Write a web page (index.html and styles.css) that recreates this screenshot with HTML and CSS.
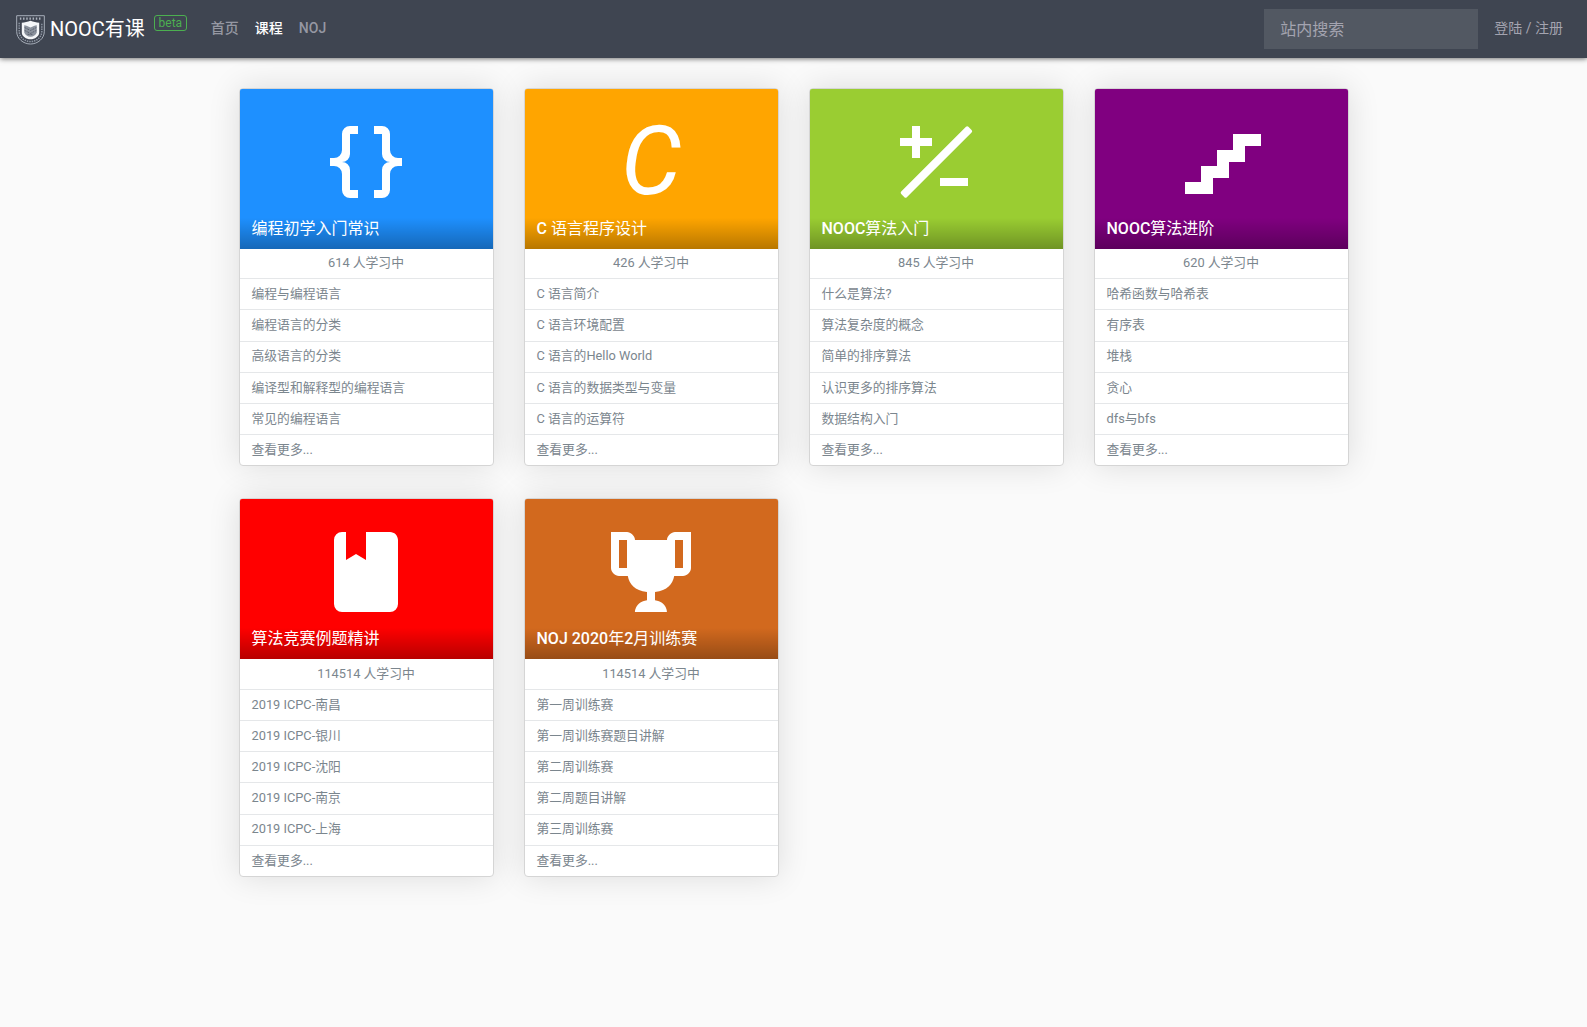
FILE: index.html
```html
<!DOCTYPE html>
<html lang="zh-CN">
<head>
<meta charset="utf-8">
<title>NOOC有课</title>
<link rel="stylesheet" href="styles.css">
</head>
<body>
<nav class="navbar">
  <a class="brand">
    <svg class="logo" viewBox="0 0 30 31" fill="none">
      <path d="M.7.7h28.6V17c0 7.500-7 13-14.300 13S.7 24.500.7 17z" stroke="#a9b0bc" stroke-width="1"/>
      <path d="M4 3.700h22" stroke="#aeb4bf" stroke-width="2.500" stroke-dasharray="1.500 1.800"/>
      <path d="M3.300 8v9.500C4 24 9.500 27.300 15 27.500c5.500-.2 11-3.500 11.700-10V8" stroke="#8e96a3" stroke-width="1.500" stroke-dasharray="1.500 1"/>
      <path d="M6 8c3-.2 6-.8 9-2 3 1.200 6 1.800 9 2v10c0 4-4.500 7-9 7s-9-3-9-7z" fill="#f4f6f8"/>
      <path d="M8.500 10.500c2 0 4 1 6.500 2.500 2.500-1.500 4.500-2.500 6.500-2.500V18c-1 2.500-3.500 4.500-6.500 4.500S9.500 20.500 8.500 18z" fill="#8b929d"/>
      <path d="m9 13 6 3 6-3M9 16l6 3 6-3M12 20h6" stroke="#59606d" stroke-width="1" stroke-dasharray="2 1"/>
    </svg>
    <span class="brand-name">NOOC有课</span>
    <span class="beta">beta</span>
  </a>
  <div class="links"><a>首页</a><a class="active">课程</a><a>NOJ</a></div>
  <input class="search" type="text" placeholder="站内搜索">
  <a class="login">登陆 / 注册</a>
</nav>
<main class="courses">
  <section class="card">
    <div class="cover blue">
      <svg class="icon" viewBox="0 0 24 24"><path d="M8,3A2,2 0 0,0 6,5V9A2,2 0 0,1 4,11H3V13H4A2,2 0 0,1 6,15V19A2,2 0 0,0 8,21H10V19H8V14A2,2 0 0,0 6,12A2,2 0 0,0 8,10V5H10V3M16,3A2,2 0 0,1 18,5V9A2,2 0 0,0 20,11H21V13H20A2,2 0 0,0 18,15V19A2,2 0 0,1 16,21H14V19H16V14A2,2 0 0,1 18,12A2,2 0 0,1 16,10V5H14V3H16Z"/></svg>
      <h2>编程初学入门常识</h2>
    </div>
    <p class="count">614 人学习中</p>
    <ul><li>编程与编程语言</li><li>编程语言的分类</li><li>高级语言的分类</li><li>编译型和解释型的编程语言</li><li>常见的编程语言</li><li>查看更多...</li></ul>
  </section>
  <section class="card">
    <div class="cover orange">
      <span class="letter">C</span>
      <h2><b>C</b> 语言程序设计</h2>
    </div>
    <p class="count">426 人学习中</p>
    <ul><li>C 语言简介</li><li>C 语言环境配置</li><li>C 语言的Hello World</li><li>C 语言的数据类型与变量</li><li>C 语言的运算符</li><li>查看更多...</li></ul>
  </section>
  <section class="card">
    <div class="cover green">
      <svg class="icon" viewBox="0 0 24 24"><path d="M6,3H8V6H11V8H8V11H6V8H3V6H6ZM13,16H20V18H13ZM19.500,3.200Q19.800,2.900 20.100,3.200L20.900,4Q21.200,4.300 20.900,4.600L4.700,20.800Q4.400,21.100 4.100,20.800L3.300,20Q3,19.700 3.300,19.400Z"/></svg>
      <h2><b>NOOC</b>算法入门</h2>
    </div>
    <p class="count">845 人学习中</p>
    <ul><li>什么是算法?</li><li>算法复杂度的概念</li><li>简单的排序算法</li><li>认识更多的排序算法</li><li>数据结构入门</li><li>查看更多...</li></ul>
  </section>
  <section class="card">
    <div class="cover purple">
      <svg class="icon" viewBox="0 0 24 24"><path d="M15,5V9H11V13H7V17H3V20H10V16H14V12H18V8H22V5H15Z"/></svg>
      <h2><b>NOOC</b>算法进阶</h2>
    </div>
    <p class="count">620 人学习中</p>
    <ul><li>哈希函数与哈希表</li><li>有序表</li><li>堆栈</li><li>贪心</li><li>dfs与bfs</li><li>查看更多...</li></ul>
  </section>
  <section class="card">
    <div class="cover red">
      <svg class="icon" viewBox="0 0 24 24"><path d="M18,22A2,2 0 0,0 20,20V4C20,2.890 19.100,2 18,2H12V9L9.500,7.500L7,9V2H6A2,2 0 0,0 4,4V20A2,2 0 0,0 6,22H18Z"/></svg>
      <h2>算法竞赛例题精讲</h2>
    </div>
    <p class="count">114514 人学习中</p>
    <ul><li>2019 ICPC-南昌</li><li>2019 ICPC-银川</li><li>2019 ICPC-沈阳</li><li>2019 ICPC-南京</li><li>2019 ICPC-上海</li><li>查看更多...</li></ul>
  </section>
  <section class="card">
    <div class="cover brown">
      <svg class="icon" viewBox="0 0 24 24"><path d="M20.200,2H18C17.100,2 16,3 16,4H8C8,3 6.900,2 6,2H2V11C2,12 3,13 4,13H6.200C6.600,15 7.900,16.700 11,17V19.080C8,19.540 8,22 8,22H16C16,22 16,19.540 13,19.080V17C16.100,16.700 17.400,15 17.800,13H20C21,13 22,12 22,11V2H20.200M4,11V4H6V11H4M20,11H18V4H20V11Z"/></svg>
      <h2><b>NOJ 2020</b>年<b>2</b>月训练赛</h2>
    </div>
    <p class="count">114514 人学习中</p>
    <ul><li>第一周训练赛</li><li>第一周训练赛题目讲解</li><li>第二周训练赛</li><li>第二周题目讲解</li><li>第三周训练赛</li><li>查看更多...</li></ul>
  </section>
</main>
</body>
</html>
```
FILE: styles.css
```css
* { box-sizing: border-box; }
body {
  margin: 0;
  min-height: 100vh;
  background: #fafafa;
  font-family: Roboto, "Noto Sans CJK SC", sans-serif;
  color: #7b868e;
}
.navbar {
  display: flex;
  align-items: center;
  height: 58px;
  padding: 0 24px 0 16px;
  background: #3f4551;
  box-shadow: 0 1px 5px rgba(0, 0, 0, .55);
  position: relative;
  font-size: 14px;
  color: #a4a4b0;
}
.brand { display: flex; align-items: center; color: #fff; }
.logo { width: 29px; height: 30px; margin: 2px 5px 0 0; }
.brand-name { font-size: 20px; line-height: 28px; margin-top: -1px; }
.beta {
  margin: -12px 0 0 9px;
  width: 33px;
  height: 16px;
  border: 1px solid #4caf50;
  border-radius: 3px;
  color: #4caf50;
  font-size: 12px;
  line-height: 14px;
  text-align: center;
}
.links {
  display: flex;
  align-items: baseline;
  gap: 16px;
  margin: -5px auto 0 24px;
  font-weight: 500;
  color: #9698a3;
}
.links .active { color: #fff; }
.search {
  width: 214px;
  height: 40px;
  padding: 0 16px;
  border: 0;
  background: #525862;
  font: 16px Roboto, "Noto Sans CJK SC", sans-serif;
  color: #fff;
}
.search::placeholder { color: #a4a4b0; opacity: 1; }
.login { margin: -5px 0 0 16px; }
.courses {
  display: grid;
  grid-template-columns: repeat(4, 255px);
  gap: 32px 30px;
  width: 1110px;
  margin: 29.600px auto 0;
  padding-bottom: 60px;
}
.card {
  background: #fff;
  border: 1px solid #d5d5d5;
  border-radius: 4px;
  box-shadow: 0 0 32px rgba(0, 0, 0, .12);
  font-size: 12.800px;
  line-height: 19.200px;
}
.cover {
  height: 160px;
  display: flex;
  flex-direction: column;
  align-items: center;
  padding-top: 25px;
  border-radius: 2px 2px 0 0;
  color: #fff;
}
.blue { background: #1e90ff; }
.orange { background: #ffa500; }
.green { background: #9acd32; }
.purple { background: #800080; }
.red { background: #f00; }
.brown { background: #d2691e; }
.icon { width: 96px; height: 96px; fill: #fff; flex: none; }
.letter {
  height: 96px;
  font-size: 96px;
  line-height: 94px;
  font-style: italic;
}
.cover h2 {
  align-self: stretch;
  margin: auto 0 0;
  height: 34px;
  padding: 2px 11px 0 12px;
  font-size: 16px;
  font-weight: 400;
  line-height: 24px;
  background: linear-gradient(transparent 8%, rgba(0, 0, 0, .28));
}
.cover b { font-weight: 500; }
.count { margin: 0; height: 29.600px; padding-top: 4.800px; text-align: center; }
ul { margin: 0; padding: 0; list-style: none; }
li { height: 31.200px; padding: 4.800px 12px 0; border-top: 1px solid #e5e7e9; }
```
